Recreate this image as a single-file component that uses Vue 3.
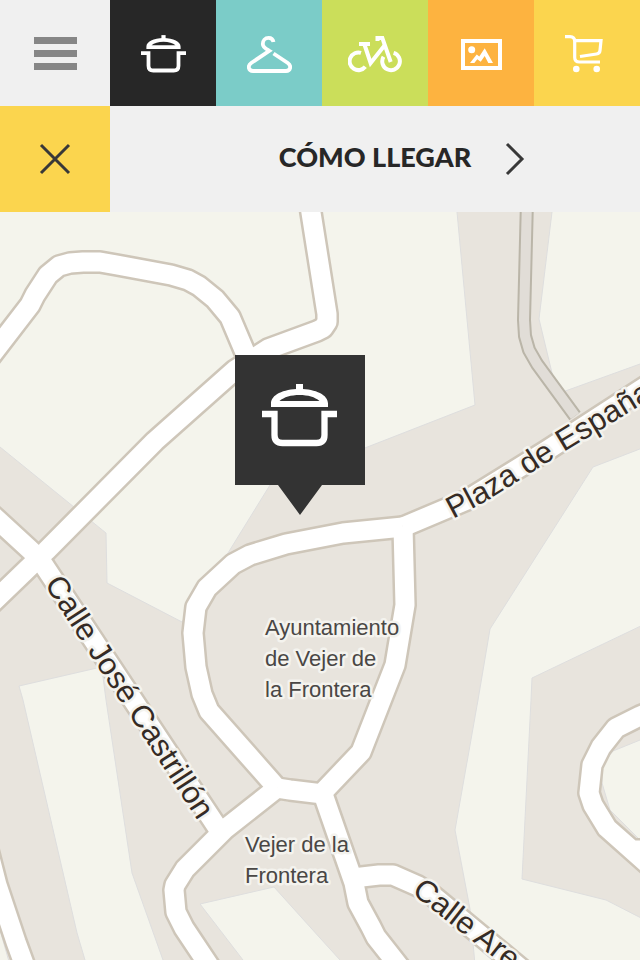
<script setup>
const potLid = 'M9 23V19.500C9 11 21 5 37.500 5S66 11 66 19.500V23ZM17.500 17H57.500C53 13 46 11 37.500 11S22 13 17.500 17Z'
const potKnob = 'M34 0H41V7H34Z'
const potBody = 'M0 30H12.500V51Q12.500 59 20.500 59H54.500Q62.500 59 62.500 51V30H75'

const categories = [
  {
    name: 'restaurantes',
    label: 'Restaurantes',
    width: 45,
    height: 38,
    viewBox: '0 0 75 63',
    fills: [potLid, potKnob],
    lines: [potBody],
    stroke: 6.3
  },
  {
    name: 'moda',
    label: 'Moda',
    width: 45,
    height: 37,
    viewBox: '0 0 45 37',
    fills: [],
    lines: ['M26.500 6C26 3.400 24 1.900 21.600 1.900C18 1.900 15.800 4.800 15.800 8C15.800 11.500 19 12.800 22.300 14.800L4.200 27C.2 29.800 1.500 35 6 35H39C43.500 35 44.800 29.800 40.800 27L26.500 17.500'],
    stroke: 3.8
  },
  {
    name: 'actividades',
    label: 'Actividades',
    width: 54,
    height: 37,
    viewBox: '0 0 54 37',
    fills: [],
    lines: [
      'M13 16.900A8.800 8.800 0 1 0 17.300 30.800',
      'M45.600 16.900A8.800 8.800 0 1 1 35.500 20.800',
      'M11 8H22M16.300 8L22.600 27L36.500 9.500',
      'M29.500 5V1.900H34.300L42.700 26'
    ],
    stroke: 4
  },
  {
    name: 'galeria',
    label: 'Galería',
    width: 41,
    height: 31,
    viewBox: '0 0 41 31',
    fills: [
      'M7.200 10.700a3.500 3.500 0 1 0 7 0a3.500 3.500 0 1 0 -7 0Z',
      'M9 24L15.700 15.500L18.300 17.500L23.700 9.300L32 24H27.300L23.700 17L19.700 22.700L16.300 20.300L13.300 24Z'
    ],
    lines: ['M2 2H39V29H2Z'],
    stroke: 4
  },
  {
    name: 'tiendas',
    label: 'Tiendas',
    width: 44,
    height: 38,
    viewBox: '0 0 44 38',
    fills: [
      'M8 34a3.300 3.300 0 1 0 6.600 0a3.300 3.300 0 1 0 -6.600 0Z',
      'M28.400 34a3.300 3.300 0 1 0 6.600 0a3.300 3.300 0 1 0 -6.600 0Z'
    ],
    lines: ['M0 1.600H5Q9.700 1.600 9.700 6.500V22.500Q9.700 27 14.500 27H35', 'M9.700 5.600H36L35 15.500Q34.700 18.500 31.500 19L15 21.500'],
    stroke: 3.2
  }
]

const blocks = [
  '-5,205 457,205 457,212 475,405 270,485 228,553 182,622 107,583 106,533 0,447 -5,443',
  '552,205 552,212 539,319 552,373 557,394 640,364 645,362 645,205',
  '645,447 593,467 490,629 478,700 455,830 470,909 475,965 645,965 645,920 606,900 522,879 531,700 532,678 645,624',
  '19,686 97,668 103,677 106,700 132,873 163,960 163,965 85,965 85,960 77,933 23,700',
  '200,904 274,887 320,938 340,960 340,965 243,965 243,960',
  '645,738 613,751 602,765 602,783 610,810 645,845',
  '-5,920 0,930 10,965 -5,965'
]

const roads = [
  'M-10 357L30 305L35 295L48 275L59 266L70 263L83 262L100 262L117 265L171 275L188 280L199 286L215 299L230 317L244 350L248 360',
  'M309 200L327 314V322L323 328L317 331L268 349L235 370L155 441L46 551L-10 605',
  'M-10 513L39 558L219 830',
  'M403 527L343 533L286 544L250 555L233 564L207 588L196 607L193 633L196 667L202 694L209 711L277 788',
  'M403 527L467 500L546 451L660 377',
  'M403 527L405 605L395 665L361 752L323 792',
  'M277 788L290 790L323 794L325 798',
  'M277 788L225 829L185 869L175 885L174 890L176 912L184 928L212 970',
  'M320 788L323 794L354 883L358 903L371 927L376 937L402 970',
  'M353 878L379 875H393L418 886L432 895L525 972',
  'M660 708L640 716L616 728L601 747L592 765L589 793L593 805L607 828L660 875M630 850H660',
  'M-12 850L-3 885L16 942L27 972'
]

const lane = 'M527 200L524 320L525 336L529 350L537 364L575 416'

const places = [
  { x: 265, y: 635, lines: ['Ayuntamiento', 'de Vejer de', 'la Frontera'] },
  { x: 245, y: 852, lines: ['Vejer de la', 'Frontera'] }
]
</script>

<template>
  <div class="app">
    <header>
      <nav class="topbar">
        <button class="menu" type="button" aria-label="Menú">
          <svg width="43" height="33" viewBox="0 0 43 33" aria-hidden="true">
            <path d="M0 0H43V7H0ZM0 13H43V20H0ZM0 26H43V33H0Z" />
          </svg>
        </button>
        <a
          v-for="cat in categories"
          :key="cat.name"
          :class="['category', cat.name]"
          :href="`#${cat.name}`"
          :aria-label="cat.label"
        >
          <svg :width="cat.width" :height="cat.height" :viewBox="cat.viewBox" aria-hidden="true">
            <path v-for="d in cat.fills" :key="d" class="icon-fill" :d="d" />
            <path v-for="d in cat.lines" :key="d" class="icon-line" :stroke-width="cat.stroke" :d="d" />
          </svg>
        </a>
      </nav>

      <div class="actions">
        <button class="close" type="button" aria-label="Cerrar">
          <svg width="32" height="32" viewBox="0 0 32 32" aria-hidden="true">
            <path d="M2 2L30 30M30 2L2 30" />
          </svg>
        </button>
        <a class="directions" href="#como-llegar">
          <span class="directions-label">CÓMO LLEGAR</span>
          <svg class="chevron" width="20" height="34" viewBox="0 0 20 34" aria-hidden="true">
            <path d="M2 2L17 17L2 32" />
          </svg>
        </a>
      </div>
    </header>

    <main>
      <svg class="map" viewBox="0 212 640 748">
        <!-- Terrain -->
        <rect class="land" x="0" y="212" width="640" height="748" />
        <polygon v-for="points in blocks" :key="points" class="block" :points="points" />

        <!-- Roads: casings first so the crossings stay open -->
        <path v-for="d in roads" :key="`casing-${d}`" class="road-casing" :d="d" />
        <path class="lane-casing" :d="lane" />
        <path class="lane" :d="lane" />
        <path v-for="d in roads" :key="d" class="road" :d="d" />

        <!-- Street names -->
        <path id="plaza-line" class="guide" d="M453 519L485 502Q522 479 562 453L680 382" />
        <text class="street" transform="translate(44 584) rotate(57)">Calle José Castrillón</text>
        <text class="street"><textPath href="#plaza-line">Plaza de España</textPath></text>
        <text class="street" transform="translate(411 893) rotate(38)">Calle Are</text>

        <!-- Places -->
        <text v-for="place in places" :key="place.y" class="place" :y="place.y">
          <tspan v-for="(line, i) in place.lines" :key="line" :x="place.x" :y="place.y + i * 31">{{ line }}</tspan>
        </text>

        <!-- Marker -->
        <path class="marker" d="M235 355H365V485H322L300 515L278 485H235Z" />
        <g transform="translate(262 384)">
          <path class="icon-fill" :d="potLid" />
          <path class="icon-fill" :d="potKnob" />
          <path class="icon-line" stroke-width="6.3" :d="potBody" />
        </g>
      </svg>
    </main>
  </div>
</template>

<style>
body {
  margin: 0;
  background: #e8e4dd;
}
</style>

<style scoped>
.app {
  font-family: Lato, "Liberation Sans", sans-serif;
  overflow: hidden;
}

.topbar {
  display: grid;
  grid-template-columns: 110px repeat(5, 1fr);
  background: #f0f0f0;
}

.menu,
.close,
.category {
  display: flex;
  align-items: center;
  justify-content: center;
  box-sizing: border-box;
  height: 106px;
  padding: 0;
  border: 0;
  cursor: pointer;
}

.category {
  padding-top: 2px;
}

.menu {
  background: #f0f0f0;
  fill: #868686;
}

.restaurantes { background: #272727; }
.moda { background: #7bccc8; }
.actividades { background: #cbde5a; }
.galeria { background: #fdb340; }
.tiendas { background: #fbd54e; }

.icon-fill {
  fill: #fff;
  fill-rule: evenodd;
}

.icon-line {
  fill: none;
  stroke: #fff;
}

.actions {
  display: grid;
  grid-template-columns: 110px 1fr;
  background: #f0f0f0;
}

.close {
  background: #fbd54e;
}

.close path,
.chevron path {
  fill: none;
  stroke: #383838;
  stroke-width: 3;
}

.directions {
  display: grid;
  grid-template-columns: 1fr auto 1fr;
  align-items: center;
  color: #272727;
  text-decoration: none;
}

.directions-label {
  grid-column: 2;
  padding-bottom: 4px;
  font-size: 27px;
  font-weight: 900;
  line-height: 32px;
}

.chevron {
  margin-left: 34px;
}

.map {
  display: block;
  width: 100%;
  height: auto;
}

.land {
  fill: #e8e4dd;
}

.block {
  fill: #f4f4ec;
  stroke: #dedede;
  stroke-width: 1;
}

.road,
.road-casing,
.lane,
.lane-casing {
  fill: none;
  stroke-linejoin: round;
}

.road-casing {
  stroke: #cec6b9;
  stroke-width: 24;
}

.road {
  stroke: #fff;
  stroke-width: 19;
}

.lane-casing {
  stroke: #bab5a8;
  stroke-width: 14;
}

.lane {
  stroke: #e1ddd7;
  stroke-width: 10;
}

.guide {
  fill: none;
}

.street,
.place {
  font-family: "Liberation Sans", Arial, sans-serif;
  paint-order: stroke;
  stroke: #f4f3ee;
  stroke-width: 5;
  stroke-linejoin: round;
}

.street {
  font-size: 31px;
  fill: #352b25;
}

.place {
  font-size: 22px;
  fill: #4a4745;
}

.marker {
  fill: #333;
}
</style>
